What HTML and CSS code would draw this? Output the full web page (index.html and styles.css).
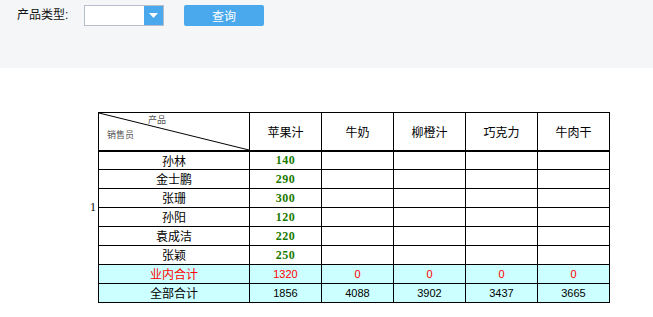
FILE: index.html
```html
<!DOCTYPE html>
<html lang="zh">
<head>
<meta charset="utf-8">
<title>产品报表</title>
<link rel="stylesheet" href="styles.css">
</head>
<body>
<div class="toolbar">
  <span class="label">产品类型:</span>
  <div class="combo">
    <div class="combo-input"></div>
    <div class="combo-btn"><svg width="9" height="5" viewBox="0 0 9 5"><path d="M0 0H9L4.5 5Z" fill="#fff"/></svg></div>
  </div>
  <button class="query">查询</button>
</div>

<div class="report">
  <div class="side">1</div>
  <table class="grid">
    <colgroup>
      <col class="c-first"><col class="c"><col class="c"><col class="c"><col class="c"><col class="c">
    </colgroup>
    <thead>
      <tr>
        <th class="corner">
          <svg class="diag" width="150" height="37" viewBox="0 0 150 37" preserveAspectRatio="none"><line x1="0" y1="0" x2="150" y2="37" stroke="#000" stroke-width="1"/></svg>
          <span class="corner-top">产品</span>
          <span class="corner-bottom">销售员</span>
        </th>
        <th>苹果汁</th>
        <th>牛奶</th>
        <th>柳橙汁</th>
        <th>巧克力</th>
        <th>牛肉干</th>
      </tr>
    </thead>
    <tbody>
      <tr class="first"><td>孙林</td><td class="num">140</td><td></td><td></td><td></td><td></td></tr>
      <tr><td>金士鹏</td><td class="num">290</td><td></td><td></td><td></td><td></td></tr>
      <tr><td>张珊</td><td class="num">300</td><td></td><td></td><td></td><td></td></tr>
      <tr><td>孙阳</td><td class="num">120</td><td></td><td></td><td></td><td></td></tr>
      <tr><td>袁成洁</td><td class="num">220</td><td></td><td></td><td></td><td></td></tr>
      <tr><td>张颖</td><td class="num">250</td><td></td><td></td><td></td><td></td></tr>
      <tr class="sum inner"><td>业内合计</td><td class="val">1320</td><td class="val">0</td><td class="val">0</td><td class="val">0</td><td class="val">0</td></tr>
      <tr class="sum"><td>全部合计</td><td class="val">1856</td><td class="val">4088</td><td class="val">3902</td><td class="val">3437</td><td class="val">3665</td></tr>
    </tbody>
  </table>
</div>
</body>
</html>
```

FILE: styles.css
```css
html, body {
  margin: 0;
  padding: 0;
  background: #fff;
  font-family: "Liberation Sans", "Noto Sans CJK SC", sans-serif;
  color: #000;
}

.toolbar {
  height: 68px;
  box-sizing: border-box;
  background: #f5f6f8;
  display: flex;
  align-items: flex-start;
  padding: 5px 0 0 17px;
}

.label {
  font-size: 12px;
  line-height: 21px;
  color: #111;
  width: 67px;
}

.combo {
  display: flex;
  width: 80px;
  height: 21px;
  box-sizing: border-box;
  border: 1px solid #b8bdcb;
  background: #fff;
}

.combo-input {
  flex: 1;
}

.combo-btn {
  width: 19px;
  background: #4aa8ec;
  display: flex;
  align-items: center;
  justify-content: center;
}

.query {
  margin-left: 20px;
  width: 80px;
  height: 21px;
  border: none;
  border-radius: 2px;
  background: #4aa9ec;
  color: #fff;
  font-family: "Noto Sans CJK SC", sans-serif;
  font-size: 12px;
  padding: 0;
  line-height: 21px;
}

.report {
  display: flex;
  align-items: center;
  margin-top: 44px;
}

.side {
  width: 96px;
  padding-right: 2px;
  text-align: right;
  font-family: "Liberation Serif", serif;
  font-size: 12px;
}

.grid {
  border-collapse: separate;
  border-spacing: 0;
  table-layout: fixed;
  width: 512px;
  border-left: 1px solid #000;
  border-top: 1px solid #000;
}

.c-first { width: 151px; }
.c { width: 72px; }

.grid th,
.grid td {
  border-right: 1px solid #000;
  border-bottom: 1px solid #000;
  padding: 0;
  text-align: center;
  font-weight: normal;
  font-size: 12px;
  font-family: "Noto Sans CJK SC", sans-serif;
}

.grid th {
  height: 37px;
  border-bottom-width: 2px;
}

.grid td {
  height: 18px;
  line-height: 18px;
}

.grid tr.first td {
  height: 17px;
  line-height: 17px;
}

.corner {
  position: relative;
}

.diag {
  position: absolute;
  left: 0;
  top: 0;
  width: 100%;
  height: 100%;
}

.corner-top,
.corner-bottom {
  position: absolute;
  font-size: 9px;
  line-height: 10px;
  color: #555;
}

.corner-top {
  left: 49px;
  top: 2px;
}

.corner-bottom {
  left: 8px;
  top: 17px;
}

.grid td.num {
  font-family: "Liberation Serif", serif;
  font-weight: bold;
  font-size: 12px;
  color: #1a7a00;
  letter-spacing: 0.5px;
}

.grid .sum td {
  background: #ccffff;
}

.grid td.val {
  font-family: "Liberation Sans", sans-serif;
  font-size: 11px;
}

.grid .inner td {
  color: #ff0000;
}
```
